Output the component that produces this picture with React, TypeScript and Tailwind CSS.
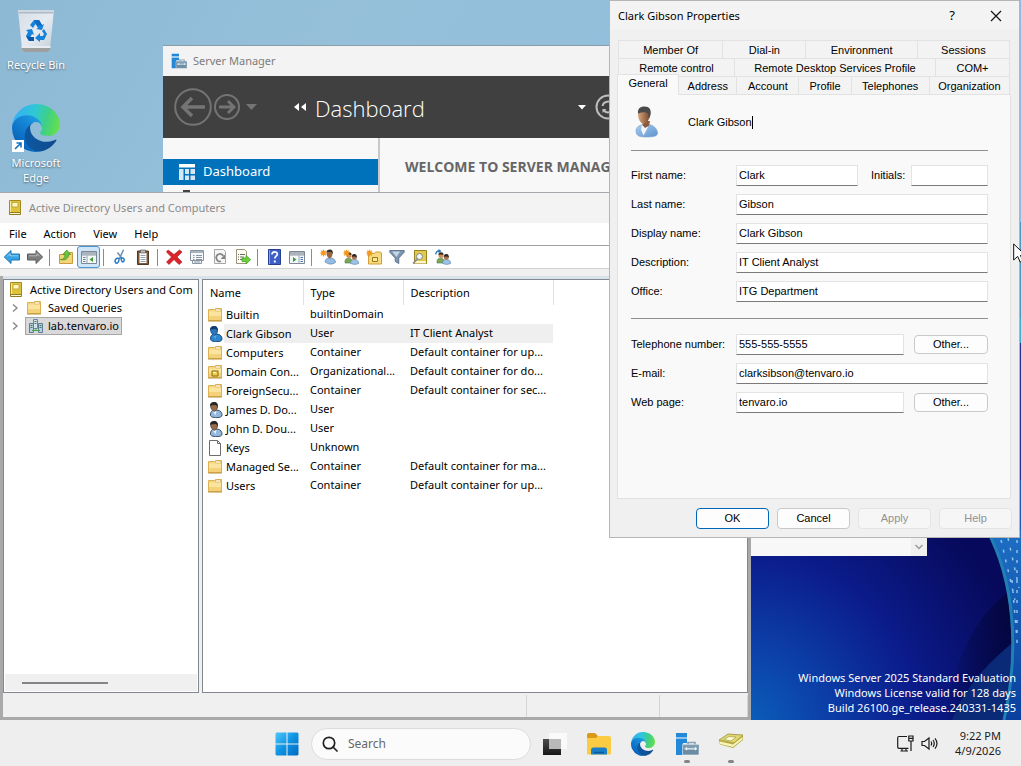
import type { ReactNode } from "react";

const UI = "font-['Noto_Sans','Open_Sans',sans-serif]";
const CLASSIC = "font-['Liberation_Sans',Arial,sans-serif]";

/* ---------- drawings ---------- */

function EdgeLogo({ className }: { className: string }) {
  return (
    <svg viewBox="0 0 256 256" className={className} aria-hidden="true">
      <defs>
        <linearGradient id="edge-a" x1="60" y1="175" x2="240" y2="175" gradientUnits="userSpaceOnUse">
          <stop offset="0" stopColor="#0c59a4" />
          <stop offset="1" stopColor="#114a8b" />
        </linearGradient>
        <linearGradient id="edge-b" x1="150" y1="90" x2="45" y2="210" gradientUnits="userSpaceOnUse">
          <stop offset="0" stopColor="#1b9de2" />
          <stop offset="0.4" stopColor="#1484d4" />
          <stop offset="1" stopColor="#0a66bd" />
        </linearGradient>
        <linearGradient id="edge-c" x1="20" y1="60" x2="250" y2="120" gradientUnits="userSpaceOnUse">
          <stop offset="0" stopColor="#35b1f1" />
          <stop offset="0.4" stopColor="#2fc8d4" />
          <stop offset="0.7" stopColor="#3fd084" />
          <stop offset="1" stopColor="#66e04c" />
        </linearGradient>
      </defs>
      <path fill="url(#edge-a)" d="M231.07 190.54c-3.41 1.78-6.93 3.35-10.54 4.71a101.93 101.93 0 0 1-35.88 6.46c-47.29 0-88.48-32.53-88.48-74.27a31.46 31.46 0 0 1 16.43-27.31c-42.77 1.8-53.76 46.37-53.76 72.48 0 73.83 68.04 81.31 82.7 81.31 7.9 0 19.82-2.3 26.97-4.56l1.31-.44a128.34 128.34 0 0 0 66.6-52.8 4 4 0 0 0-5.35-5.58z" />
      <path fill="url(#edge-b)" d="M105.73 241.42a79.2 79.2 0 0 1-22.74-21.34 80.72 80.72 0 0 1 29.53-120c3.12-1.47 8.45-4.13 15.54-4a32.35 32.35 0 0 1 25.69 13 31.88 31.88 0 0 1 6.36 18.66c0-.21 24.46-79.6-80-79.6-43.9 0-80 41.66-80 78.21a130.15 130.15 0 0 0 12.11 56 128 128 0 0 0 156.38 67.11 75.55 75.55 0 0 1-62.78-8z" />
      <path fill="url(#edge-c)" d="M152.33 148.86c-.81 1.05-3.3 2.5-3.3 5.66 0 2.61 1.7 5.12 4.72 7.23 14.38 10 41.49 8.68 41.56 8.68a59.56 59.56 0 0 0 30.27-8.35 61.38 61.38 0 0 0 30.43-52.88c.26-22.41-8-37.31-11.34-43.91C223.48 23.84 177.72 0 128 0A128 128 0 0 0 0 126.2c.48-36.54 36.8-66.05 80-66.05 3.5 0 23.46.34 42 10.07 16.34 8.58 24.9 18.94 30.85 29.21 6.18 10.67 7.28 24.15 7.28 29.52s-2.74 13.33-7.8 19.91z" />
    </svg>
  );
}

function RecycleBin() {
  return (
    <svg viewBox="0 0 48 48" className="size-12" aria-hidden="true">
      <defs>
        <linearGradient id="bin" x1="0" y1="0" x2="1" y2="1">
          <stop offset="0" stopColor="#d5dde6" />
          <stop offset="0.5" stopColor="#e6ebf1" />
          <stop offset="1" stopColor="#c3ccd6" />
        </linearGradient>
      </defs>
      <path d="M6 4h36l-4 39q-.3 3-3 3H13q-2.700-0-3-3z" fill="url(#bin)" />
      <path d="M8 4.500h32l2 3H6z" fill="#aebbc8" />
      <path d="M6 4h36l-.4 2H6.400z" fill="#cfd8e1" />
      <path d="M9.600 42h28.800l-.4 2q-.5 2-3 2H13q-2.500 0-3-2z" fill="#9da09f" />
      <path d="M9.500 40h29l-.2 2H9.700z" fill="#e9edf1" />
      <g fill="#1583dc">
        <path d="M18 19l4-5h5l3 5 2-1-2 6-6-1 2-1-2.500-4-2.500 4z" />
        <path d="M32 23l3 5-3 6h-4v2l-5-4 5-5v3h3l1-2-2-3z" />
        <path d="M14 24l6-1 2 6-2-1-1.500 3H22v4h-5l-3-5 2-4z" />
      </g>
      <path d="M14 30l3 5h5v-4h-4z" fill="#0b58a8" />
      <path d="M22 14h5l3 5-4 1-3-4z" fill="#0f6ac0" />
    </svg>
  );
}

function ServerManagerIcon({ className }: { className: string }) {
  return (
    <svg viewBox="0 0 24 24" className={className} aria-hidden="true">
      <path d="M1 1h11v4H1zM1 7h11v4H8v12H1z" fill="#2488d8" />
      <path d="M1 5h11v2H1z" fill="#8cc4ee" />
      <path d="M13 13v-2.500h7V13" fill="none" stroke="#8aa2b3" strokeWidth="1.600" />
      <path d="M7.500 12.500H24V23H7.500z" fill="#6a8ca5" stroke="#f0f3f5" strokeWidth=".6" />
      <path d="M8 12.800h15.700v4H8z" fill="#7f9db2" />
      <path d="M9.500 16.800h12.500M11.500 15.200v3M20.500 15.200v3" stroke="#eef4f8" strokeWidth="1.200" fill="none" />
    </svg>
  );
}

function BookIcon({ className = "size-4" }: { className?: string }) {
  return (
    <svg viewBox="0 0 16 16" className={className} aria-hidden="true">
      <path d="M2.500.5h11v12h-11z" fill="#dfc33d" stroke="#a38a1f" />
      <path d="M5 2.500h6v4.500H5z" fill="#fdf6c0" stroke="#b9a033" strokeWidth=".8" />
      <path d="M2.500 12.500h11v2h-11z" fill="#fff9d6" stroke="#8f7a1e" />
      <path d="M3.500 1v11" stroke="#f8eea0" />
    </svg>
  );
}

function FolderIcon({ unit = false }: { unit?: boolean }) {
  return (
    <svg viewBox="0 0 16 16" className="size-4 shrink-0" aria-hidden="true">
      <path d="M1.500 2.500h6l1-1h6v12h-13z" fill="#f6d77f" stroke="#dcb252" />
      <path d="M2 4.500h12v8.500H2z" fill="#fbe4a0" />
      <path d="M2 9h12v4H2z" fill="#f3d27a" />
      <path d="M8.500 2h5v2h-5z" fill="#fffdf0" stroke="#d3ab52" strokeWidth=".6" />
      <path d="M1 14h14" stroke="#b98f35" />
      {unit && (
        <>
          <path d="M5 7h6v5H5z" fill="#f0cf4a" stroke="#8a6a10" />
          <path d="M6 8.500h3" stroke="#fffbe0" />
        </>
      )}
    </svg>
  );
}

function PersonIcon({ className = "size-4", selected = false }: { className?: string; selected?: boolean }) {
  const hair = selected ? "#123f70" : "#2b2724";
  const skin = selected ? "#2b79ba" : "#9b6b48";
  const shirt = selected ? "#2e86cf" : "#93b9de";
  const line = selected ? "#0f3f70" : "#2f4254";
  return (
    <svg viewBox="0 0 16 16" className={className + " shrink-0"} aria-hidden="true">
      <path d="M3.500 13c0-3 1-4.300 3-4.800h4.500c2.500.5 4 2.400 4 4.700 0 1.800-1.600 2.700-5 2.700-4.500 0-6.500-.8-6.500-2.600z" fill={shirt} stroke={line} strokeWidth=".9" />
      <path d="M5.500 8.800h4l-1 4.500z" fill={selected ? "#5aa6df" : "#eef4fa"} />
      <path d="M3.500 3.500C3.500 1.800 5 .6 7 .6s3.500 1.200 3.500 3.600S9.200 9.300 7.400 9.300 3.500 6.500 3.500 3.500z" fill={skin} stroke={line} strokeWidth=".7" />
      <path d="M3 4C2.800 1.700 4.500.1 7.200.1S11.400 2 10.600 6C10 3.900 9.500 3.200 8.500 3 6.900 3.400 4.500 3.200 3 4z" fill={hair} />
    </svg>
  );
}

function LargeUser() {
  return (
    <svg viewBox="0 0 32 32" className="size-8" aria-hidden="true">
      <defs>
        <linearGradient id="shirt" x1="0" y1="0" x2="1" y2="1">
          <stop offset="0" stopColor="#a9cdef" />
          <stop offset="1" stopColor="#5f93cd" />
        </linearGradient>
        <linearGradient id="skin" x1="0" y1="0" x2="1" y2="0">
          <stop offset="0" stopColor="#d7a77f" />
          <stop offset="1" stopColor="#79492c" />
        </linearGradient>
      </defs>
      <path d="M5 25c0-4 3-5.500 7-6.500h6c5 1 8.500 4.500 8.500 9 0 2.500-4 3.500-11 3.500S5 30 5 25z" fill="url(#shirt)" stroke="#7aa2cb" strokeWidth=".6" />
      <path d="M11 19l6 2-4.500 8.500-2.500-6z" fill="#f2f6fb" />
      <path d="M12 15h7l-1 4.500-4 2.500-2.500-3z" fill="#8c5837" />
      <path d="M7 8c0-4 2.500-6 6-6s6 2.500 5.500 7.500c-.4 4.500-2.500 8-5.500 8.300C9.500 17.800 7 13 7 8z" fill="url(#skin)" />
      <path d="M7 7.500C6.500 3 9 .6 13.500.6 18.500.6 20.500 4 19.500 9l-1.500 4-.8-5C16 6 12 5.500 7 7.500z" fill="#4a4a49" />
    </svg>
  );
}

function DomainIcon() {
  return (
    <svg viewBox="0 0 16 16" className="size-4 shrink-0" aria-hidden="true">
      <path d="M5.500 1.500h4v9h-4z" fill="#d4e3ee" stroke="#66889f" />
      <path d="M1.500 5.500h4v9h-4zM10.500 5.500h4v9h-4z" fill="#b9cfdf" stroke="#5b7d95" />
      <path d="M6.500 3.500h2M6.500 5.500h2M2.500 7.500h2M11.500 7.500h2M2.500 9.500h2M11.500 9.500h2" stroke="#3f7a52" />
      <path d="M4 12.500h8M8 10v3" stroke="#4aa84a" />
    </svg>
  );
}

function PageIcon() {
  return (
    <svg viewBox="0 0 16 16" className="size-4 shrink-0" aria-hidden="true">
      <path d="M2.500.5h8l3 3v12h-11z" fill="#fff" stroke="#6d6d6d" />
      <path d="M10.500.5v3h3" fill="none" stroke="#6d6d6d" />
    </svg>
  );
}

const Svg = ({ children }: { children: ReactNode }) => (
  <svg viewBox="0 0 16 16" className="size-4" aria-hidden="true">
    {children}
  </svg>
);

const Star = () => (
  <path d="M3.500 0l.8 2 2-.7-.8 2 2 .8-2 .7.8 2-2-.7-.8 2-.8-2-2 .7.8-2-2-.7 2-.8-.8-2 2 .7z" fill="#f39a1d" />
);

const Crew = () => (
  <>
    <path d="M2 12.500c0-2.500 1.500-3.200 3.500-3.200s3.500.7 3.500 3.200v1.500H2z" fill="#7aa858" stroke="#4d7a35" strokeWidth=".6" />
    <circle cx="6" cy="6.500" r="2.500" fill="#c98f5f" />
    <path d="M3.500 6q0-3 2.700-2.800 2.500.2 2.300 2.800-2.500-1.200-5 0z" fill="#3b2d20" />
    <path d="M7.500 14.500c0-3 1.800-4 4-4s4.300 1 4.300 4q-4 2-8.300 0z" fill="#9dc1e4" stroke="#5d88b3" strokeWidth=".6" />
    <circle cx="11.300" cy="8.300" r="2.500" fill="#a8754f" />
    <path d="M8.800 7.800q0-3 2.700-2.800 2.500.2 2.300 3.300-2-1.500-5-.5z" fill="#2c2622" />
  </>
);

const Arrow = ({ fill, stroke, flip = false }: { fill: string; stroke: string; flip?: boolean }) => (
  <Svg>
    <path
      d={flip ? "M15.700 8L9 1.500v3.500H.5v6H9v3.500z" : "M.3 8L7 1.500v3.500h8.500v6H7v3.500z"}
      fill={fill}
      stroke={stroke}
    />
    <path d={flip ? "M2 6.800h8V4.500L13 7.500" : "M14 6.800H6V4.500L3 7.500"} fill="none" stroke="#fff" strokeOpacity=".45" />
  </Svg>
);

const ConsoleArt = ({ right = false }: { right?: boolean }) => (
  <Svg>
    <path d="M.5 2.500h15v12H.5z" fill="#f4f7fa" stroke="#7d8892" />
    <path d="M1 3h14v2.500H1z" fill="#a8b3bd" />
    <path d={right ? "M10 6.500v8" : "M6 6.500v8"} stroke="#9aa4ad" />
    <path d="M1 6h14" stroke="#8c97a1" />
    {right ? (
      <>
        <path d="M4 8v5l3.500-2.500z" fill="#3f9b34" />
        <path d="M11.500 8.500h2.500M11.500 10.500h2.500M11.500 12.500h2.500" stroke="#4e77b3" />
      </>
    ) : (
      <>
        <path d="M12 8v5l-3.500-2.500z" fill="#3f9b34" />
        <path d="M2 8.500h2.500M2 10.500h2.500M2 12.500h2.500" stroke="#6f8396" />
      </>
    )}
  </Svg>
);

type Tool = { name: string; art: ReactNode; active?: boolean } | null;

const TOOLS: Tool[] = [
  { name: "Back", art: <Arrow fill="#3aa3e3" stroke="#1973b5" /> },
  { name: "Forward", art: <Arrow fill="#7d7d7d" stroke="#5c5c5c" flip /> },
  null,
  {
    name: "Up one level",
    art: (
      <Svg>
        <path d="M1.500 5.500h5l1-2h7v11h-13z" fill="#f4d479" stroke="#c89b3c" />
        <path d="M2.500 10.500C5.500 10.300 7 9 7 5.500H4.800L8.700 1l4 4.500H10.500c0 4-3 6.300-8 5z" fill="#6cc43a" stroke="#3b8c1f" strokeWidth=".7" />
      </Svg>
    ),
  },
  { name: "Show or hide console tree", art: <ConsoleArt />, active: true },
  null,
  {
    name: "Cut",
    art: (
      <Svg>
        <path d="M11.500 .8L7.500 9.500M5.500 3.500L10 9.500" stroke="#6d8fae" strokeWidth="1.500" />
        <path d="M7 9.500c-3-1-5 2-3.500 4s3.800-.5 3.500-4zM9 9c2.500-.5 3.800 1 3 3s-3 .5-3-3z" fill="none" stroke="#2878c0" strokeWidth="1.500" />
      </Svg>
    ),
  },
  {
    name: "Paste",
    art: (
      <Svg>
        <path d="M2.500 2h11v13.500h-11z" fill="#7b5a3c" stroke="#4f3722" />
        <path d="M4.500 4h7v10h-7z" fill="#fff" />
        <path d="M5.500 1h5v3h-5z" fill="#b9b9b9" stroke="#5e5e5e" strokeWidth=".7" />
        <path d="M5.500 6.500h5M5.500 8.500h5M5.500 10.500h5M5.500 12.500h5" stroke="#8ba0b5" />
      </Svg>
    ),
  },
  null,
  {
    name: "Delete",
    art: (
      <Svg>
        <path d="M2 1l6 4.500L13.500 1 16 3l-5 5 5 5-3 2.500-5-5-5 5L.5 13l5-5-5-5z" fill="#dc2328" stroke="#a81318" strokeWidth=".6" />
      </Svg>
    ),
  },
  {
    name: "Properties",
    art: (
      <Svg>
        <path d="M1.500 1.500h13v10h-13zM3.500 11.500v3h9v-3" fill="#f5f7f9" stroke="#8a949e" />
        <path d="M2 3h12" stroke="#aab3bc" strokeWidth="2" />
        <path d="M4 6.500h1.500M7 6.500h6M4 8.500h1.500M7 8.500h6M4 10.500h1.500M7 10.500h6M5 13h6" stroke="#8796a5" />
      </Svg>
    ),
  },
  {
    name: "Refresh",
    art: (
      <Svg>
        <path d="M2.500.5h9l2 2v12h-11z" fill="#f6f6f6" stroke="#a6a6a6" />
        <path d="M11.300 7A3.700 3.700 0 1 0 9 12.300" fill="none" stroke="#838383" strokeWidth="1.700" />
        <path d="M13 5.500v4.500H8.500z" fill="#838383" />
      </Svg>
    ),
  },
  {
    name: "Export list",
    art: (
      <Svg>
        <path d="M1.500.5h8l2 2v12h-10z" fill="#fffdf0" stroke="#9a947c" />
        <path d="M3 5.500h1M5 5.500h5M3 8h1M5 8h4M3 10.500h1M5 10.500h3" stroke="#6a6a6a" />
        <path d="M7 9h4V6.500l4.700 4.200L11 15v-2.500H7z" fill="#6ccf3c" stroke="#3b9a1d" strokeWidth=".7" />
      </Svg>
    ),
  },
  null,
  {
    name: "Help",
    art: (
      <Svg>
        <path d="M2.500.5h12v15h-12z" fill="#3c5fc8" stroke="#28408f" />
        <path d="M3.500 1v14" stroke="#8aa2ec" />
        <path d="M6 5.500c0-3.500 5.300-3.500 5.300-.3 0 2-2.500 2-2.500 4.300" fill="none" stroke="#fff" strokeWidth="1.700" />
        <path d="M7.800 11.500h2v2h-2z" fill="#fff" />
      </Svg>
    ),
  },
  { name: "Show or hide action pane", art: <ConsoleArt right /> },
  null,
  {
    name: "New user",
    art: (
      <Svg>
        <path d="M5 13c0-2.500 1.500-3.500 3.500-4h3c2.500.5 4 2 4 4.500q-5 3.500-10.500-.5z" fill="#93bce4" stroke="#557ea8" strokeWidth=".6" />
        <path d="M6.500 4c0-2 1.200-3 3-3s3 1.200 3 3.500-1.200 4.700-2.800 4.700S6.500 7 6.500 4z" fill="#9a6440" />
        <path d="M6.500 3.500C6.500 1.500 8 .5 10 .5s3.300 1.800 2.700 5c-.5-2-1.200-2.500-2.200-2.700-1.500.3-2.800 0-4 .7z" fill="#332b26" />
        <Star />
      </Svg>
    ),
  },
  { name: "New group", art: <Svg><Crew /><Star /></Svg> },
  {
    name: "New organizational unit",
    art: (
      <Svg>
        <path d="M2.500 4.500h6l1-1.500h5l1 1v11h-13z" fill="#f7d97e" stroke="#cf9f3b" />
        <path d="M6.500 8.500h5v4h-5z" fill="#fbeb9c" stroke="#9b7a16" />
        <Star />
      </Svg>
    ),
  },
  {
    name: "Filter",
    art: (
      <Svg>
        <path d="M.8 1.500h14.400v1.800L9.800 9v5.500l-3.600-2V9L.8 3.300z" fill="#7c96b1" stroke="#4c6580" strokeWidth=".8" />
        <path d="M3 2.500h8L7.500 8z" fill="#c9d6e3" />
      </Svg>
    ),
  },
  {
    name: "Find objects",
    art: (
      <Svg>
        <path d="M2.500 1.500h12v13h-12z" fill="#e3ca4c" stroke="#97801f" />
        <path d="M3 12h11v2.500H3z" fill="#fff7c9" />
        <circle cx="7.500" cy="7.500" r="3" fill="#f2f8fd" stroke="#7a8791" />
        <path d="M5.500 9.800L1 14.500" stroke="#8d8d8d" strokeWidth="1.700" />
      </Svg>
    ),
  },
  {
    name: "Add to group",
    art: (
      <Svg>
        <Crew />
        <path d="M.8 5.500Q.8 2 4 2" fill="none" stroke="#2478bd" strokeWidth="1.300" />
        <path d="M3.500 0l3 2.100-3 2.100z" fill="#2478bd" />
      </Svg>
    ),
  },
];

function Wallpaper() {
  return (
    <svg viewBox="0 0 1021 720" preserveAspectRatio="none" className="absolute inset-0 size-full" aria-hidden="true">
      <defs>
        <linearGradient id="sky" x1="0" y1="0" x2="1" y2="0.400">
          <stop offset="0" stopColor="#8db9d5" />
          <stop offset="0.300" stopColor="#96c0da" />
          <stop offset="1" stopColor="#8cbdde" />
        </linearGradient>
        <radialGradient id="deep" cx="740" cy="730" r="290" gradientUnits="userSpaceOnUse">
          <stop offset="0" stopColor="#0a62bd" />
          <stop offset="0.300" stopColor="#0c3fa8" />
          <stop offset="0.620" stopColor="#0b1b8a" />
          <stop offset="1" stopColor="#070a5c" />
        </radialGradient>
        <linearGradient id="shade" x1="0" y1="0" x2="1" y2="0">
          <stop offset="0" stopColor="#04063e" stopOpacity="0" />
          <stop offset="1" stopColor="#04063e" stopOpacity="1" />
        </linearGradient>
        <linearGradient id="petal" x1="0" y1="0" x2="0" y2="1">
          <stop offset="0" stopColor="#1d6fc4" />
          <stop offset="1" stopColor="#0a3f9e" />
        </linearGradient>
      </defs>
      <path d="M0 0h1021v720H0z" fill="url(#sky)" />
      <path d="M740 343h281v377H740z" fill="url(#deep)" />
      <path d="M1012 590c-36 22-60 75-68 130h72V600z" fill="url(#shade)" />
      <path d="M1012 643c-30 25-50 50-60 77h69v-77z" fill="#0a2a78" />
      <path d="M1018 222h3v96h-3z" fill="#4a9ac8" />
      <path d="M1018 318h3v25h-3z" fill="#3cb0d2" />
      <path d="M1018 343h3v137h-3z" fill="#24309c" />
      <path d="M1018 480h3v60h-3z" fill="#1c58b8" />
      <path d="M986 530c26 45 33 120 19 190h16V530z" fill="url(#petal)" />
      <path d="M987 530c27 50 33 120 17 190" fill="none" stroke="#2080b4" strokeWidth="3" />
      <g stroke="#8fc0ec" strokeWidth="1.500" strokeDasharray="3 7">
        <path d="M1001 540l14 60M1008 538l11 50M1017 540v110M1012 580l5 60" />
      </g>
    </svg>
  );
}

/* ---------- desktop ---------- */

function DesktopIcon({ label, children }: { label: string; children: ReactNode }) {
  return (
    <button type="button" className="flex w-[72px] flex-col items-center text-center text-[11px] leading-[15px] text-white [text-shadow:0_1px_2px_#0008]">
      {children}
      <span className="mt-[3px] px-1">{label}</span>
    </button>
  );
}

function ServerManager() {
  return (
    <section aria-label="Server Manager" className="absolute left-[163px] top-[45px] flex h-[511px] w-[764px] flex-col border-t border-[#8d9da8] bg-[#f8f8f8]">
      <header className="flex h-[30px] shrink-0 items-center gap-[6px] bg-[#f3f3f3] px-2 text-[11px] text-[#7c7c7c]">
        <ServerManagerIcon className="size-4" />
        Server Manager
      </header>
      <div className="flex h-[62px] shrink-0 items-center bg-[#404040] pl-[11px] text-white">
        <svg viewBox="0 0 84 40" className="h-10 w-[84px]" fill="none" stroke="#747474" aria-hidden="true">
          <circle cx="19" cy="20" r="17.800" strokeWidth="2" />
          <path d="M31 20H9M18 11l-9 9 9 9" strokeWidth="3.500" />
          <circle cx="53" cy="20" r="12" strokeWidth="2" />
          <path d="M45 20h15M54 14l6 6-6 6" strokeWidth="2.800" />
          <path d="M72 17h11l-5.500 6z" fill="#747474" stroke="none" />
        </svg>
        <svg viewBox="0 0 14 10" className="ml-[35px] h-[10px] w-[14px]" fill="#fff" aria-hidden="true">
          <path d="M6 1v8L1 5zM13 1v8L8 5z" />
        </svg>
        <h1 className="ml-2 w-[263px] pt-[2px] font-['Open_Sans',sans-serif] text-[22px] font-light">Dashboard</h1>
        <svg viewBox="0 0 8 5" className="h-[5px] w-2" fill="#fff" aria-hidden="true">
          <path d="M0 0h8L4 4.500z" />
        </svg>
        <svg viewBox="0 0 26 26" className="ml-[9px] size-[26px]" fill="none" stroke="#bdbdbd" strokeWidth="2" aria-hidden="true">
          <circle cx="13" cy="13" r="11.500" />
          <path d="M7.500 12c1-5 8-6 10-1.500M18.500 14c-1 5-8 6-10 1.500" />
          <path d="M18.500 7v4h-4zM7.500 19v-4h4z" fill="#bdbdbd" stroke="none" />
        </svg>
      </div>
      <div className="flex min-h-0 flex-1">
        <nav className="w-[217px] border-r-2 border-[#c8c8cb] pt-[21px]">
          <button type="button" className="flex h-[26px] w-full items-center gap-2 bg-[#0072bc] pl-4 text-[13px] text-white">
            <svg viewBox="0 0 16 16" className="size-4" aria-hidden="true">
              <path d="M0 0h16v3.500H0z" fill="#fff" />
              <path d="M0 5h4.500v11H0zM6 5h4v5H6zM11.500 5H16v5h-4.500zM6 11.500h4V16H6zM11.500 11.500H16V16h-4.500z" fill="#d5e7f4" />
            </svg>
            Dashboard
          </button>
          <svg viewBox="0 0 16 16" className="ml-4 mt-[5px] size-4" aria-hidden="true">
            <path d="M4 0h7v16H4z" fill="#444" />
          </svg>
        </nav>
        <div className="flex min-w-0 flex-1">
          <h2 className="min-w-0 flex-1 whitespace-nowrap pl-[25px] pt-[19px] font-['Open_Sans',sans-serif] text-[14px] font-bold leading-5 text-[#666]">WELCOME TO SERVER MANAGER</h2>
          <div className="flex w-4 items-end justify-center bg-[#f0f0f0] pb-1">
            <svg viewBox="0 0 8 10" className="h-[10px] w-2" fill="none" stroke="#9b9b9b" strokeWidth="1.500" aria-hidden="true">
              <path d="M.5 3L4 6.500 7.500 3" />
            </svg>
          </div>
        </div>
      </div>
    </section>
  );
}

const ROWS = [
  { icon: <FolderIcon />, name: "Builtin", type: "builtinDomain", desc: "" },
  { icon: <PersonIcon selected />, name: "Clark Gibson", type: "User", desc: "IT Client Analyst", selected: true },
  { icon: <FolderIcon />, name: "Computers", type: "Container", desc: "Default container for up..." },
  { icon: <FolderIcon unit />, name: "Domain Con...", type: "Organizational...", desc: "Default container for do..." },
  { icon: <FolderIcon />, name: "ForeignSecu...", type: "Container", desc: "Default container for sec..." },
  { icon: <PersonIcon />, name: "James D. Do...", type: "User", desc: "" },
  { icon: <PersonIcon />, name: "John D. Dou...", type: "User", desc: "" },
  { icon: <PageIcon />, name: "Keys", type: "Unknown", desc: "" },
  { icon: <FolderIcon />, name: "Managed Se...", type: "Container", desc: "Default container for ma..." },
  { icon: <FolderIcon />, name: "Users", type: "Container", desc: "Default container for up..." },
];

const Chevron = () => (
  <svg viewBox="0 0 8 8" className="h-2 w-2" fill="none" stroke="#8a8a8a" strokeWidth="1.400" aria-hidden="true">
    <path d="M2 .5L6 4 2 7.500" />
  </svg>
);

function DirectoryWindow() {
  return (
    <section aria-label="Active Directory Users and Computers" className="absolute bottom-0 left-0 top-[192px] flex w-[751px] flex-col border-t border-[#a5a9ad] bg-[#a9a9a9] text-[11px] text-black">
      <header className="flex h-[30px] shrink-0 items-center gap-[6px] bg-[#f3f3f3] pl-[7px] text-[#8a8a8a]">
        <BookIcon />
        Active Directory Users and Computers
      </header>
      <nav className="flex h-[22px] shrink-0 items-center gap-[17px] bg-white pl-[9px]">
        {["File", "Action", "View", "Help"].map((m) => (
          <button key={m} type="button">{m}</button>
        ))}
      </nav>
      <div className="flex h-[24px] shrink-0 items-center border-y border-b-[#d2d2d2] border-t-[#a0a0a0] bg-white">
        {TOOLS.map((t, i) =>
          t ? (
            <button
              key={t.name}
              type="button"
              aria-label={t.name}
              className={
                t.active
                  ? "flex h-[22px] w-[23px] items-center justify-center rounded-[3px] border border-[#4a94d8] bg-[#cfe5f8]"
                  : "flex h-[22px] w-[23px] items-center justify-center"
              }
            >
              {t.art}
            </button>
          ) : (
            <span key={i} className="ml-[3px] mr-1 h-[17px] w-px bg-[#8b8b8b]" />
          ),
        )}
      </div>
      <div className="h-[7px] shrink-0 bg-[#f0f0f0]" />
      <div className="mx-[3px] flex min-h-0 flex-1 flex-col bg-[#f0f0f0]">
        <div className="h-[3px] shrink-0 bg-[#d7e2eb]" />
        <div className="flex min-h-0 flex-1 gap-[3px]">
          <div className="flex w-[196px] flex-col border border-[#828790] bg-white pt-px">
            <ul className="flex-1 overflow-hidden whitespace-nowrap leading-[18px]">
              <li className="flex items-center gap-[6px] pl-1">
                <BookIcon className="size-4 shrink-0" />
                Active Directory Users and Com
              </li>
              <li className="flex items-center gap-[6px] pl-[7px]">
                <Chevron />
                <span className="ml-[1px]"><FolderIcon /></span>
                Saved Queries
              </li>
              <li className="flex items-center gap-[6px] pl-[7px]">
                <Chevron />
                <span className="flex h-[18px] items-center gap-1 border border-[#a6a6a6] bg-[#d9d9d9] px-[2px]">
                  <DomainIcon />
                  lab.tenvaro.io
                </span>
              </li>
            </ul>
            <div className="mx-px mb-px flex h-[17px] items-center bg-[#f0f0f0] pl-[17px]">
              <span className="h-[2px] w-[86px] bg-[#858585]" />
            </div>
          </div>
          <div className="min-w-0 flex-1 overflow-hidden border border-[#828790] bg-white">
            <table className="w-[350px] table-fixed border-collapse">
              <colgroup>
                <col className="w-[100px]" />
                <col className="w-[100px]" />
                <col className="w-[150px]" />
              </colgroup>
              <thead>
                <tr className="h-[25px] text-left">
                  {["Name", "Type", "Description"].map((h) => (
                    <th key={h} scope="col" className="border-r border-[#e2e2e2] px-[7px] pt-[2px] font-normal">{h}</th>
                  ))}
                </tr>
              </thead>
              <tbody>
                {ROWS.map((r) => (
                  <tr key={r.name} className="h-[19px] whitespace-nowrap">
                    <td className="p-0">
                      <span className="flex items-center gap-[1px] pl-[4px]">
                        {r.icon}
                        <span className={r.selected ? "flex-1 bg-[#efefef] pl-[2px] leading-[19px]" : "pl-[2px] leading-[19px]"}>{r.name}</span>
                      </span>
                    </td>
                    <td className={r.selected ? "bg-[#efefef] py-0 pl-[7px]" : "py-0 pl-[7px]"}>{r.type}</td>
                    <td className={r.selected ? "bg-[#efefef] py-0 pl-[7px]" : "py-0 pl-[7px]"}>{r.desc}</td>
                  </tr>
                ))}
              </tbody>
            </table>
          </div>
        </div>
        <div className="mt-[2px] flex h-[22px] shrink-0 divide-x divide-[#d5d5d5]">
          <span className="flex-1" />
          <span className="w-[133px]" />
          <span className="w-[88px] border-r border-[#d5d5d5]" />
        </div>
      </div>
      <div className="h-[3px] shrink-0" />
    </section>
  );
}

function Tab({ children }: { children: ReactNode }) {
  return (
    <button type="button" role="tab" aria-selected="false" className="h-[18px] border-r border-t border-[#e2e2e2] bg-[#f3f3f3] pt-px">
      {children}
    </button>
  );
}

function Field({ id, label, value, children }: { id: string; label: string; value: string; children?: ReactNode }) {
  return (
    <div className="flex h-[21px] items-center">
      <label htmlFor={id} className="w-[105px] shrink-0">{label}</label>
      <input
        id={id}
        defaultValue={value}
        className="h-[21px] min-w-0 flex-1 border border-[#e3e3e3] border-b-[#7a7a7a] bg-white pb-px pl-[2px] outline-none"
      />
      {children}
    </div>
  );
}

const Other = ({ label }: { label: string }) => (
  <button type="button" aria-label={label} className="ml-[10px] h-[19px] w-[74px] rounded-[4px] border border-[#c9c9c9] bg-[#fdfdfd]">
    Other...
  </button>
);

function PropertiesDialog() {
  return (
    <section role="dialog" aria-label="Clark Gibson Properties" className={`absolute right-[1px] top-0 flex h-[538px] w-[411px] flex-col border border-[#b5b5b5] bg-[#f0f0f0] text-[11px] text-black ${CLASSIC}`}>
      <header className="flex h-[29px] shrink-0 items-center bg-[#f3f3f3] pl-2 font-['Noto_Sans',sans-serif]">
        <h2 className="flex-1 pt-px">Clark Gibson Properties</h2>
        <button type="button" aria-label="Help" className="w-[30px] text-[13px]">?</button>
        <button type="button" aria-label="Close" className="ml-[14px] mr-2 flex w-[30px] justify-center">
          <svg viewBox="0 0 12 12" className="size-3" stroke="#111" strokeWidth="1.200" aria-hidden="true">
            <path d="M1 1l10 10M11 1L1 11" />
          </svg>
        </button>
      </header>
      <div className="ml-[7px] mr-[8px] mt-[10px] flex-1">
        <div role="tablist">
          <div className="mx-[1px] grid grid-cols-[104fr_83fr_111fr_92fr] border-l border-[#e2e2e2]">
            <Tab>Member Of</Tab>
            <Tab>Dial-in</Tab>
            <Tab>Environment</Tab>
            <Tab>Sessions</Tab>
          </div>
          <div className="mx-[1px] grid grid-cols-[116fr_201fr_74fr] border-l border-[#e2e2e2]">
            <Tab>Remote control</Tab>
            <Tab>Remote Desktop Services Profile</Tab>
            <Tab>COM+</Tab>
          </div>
          <div className="mr-[1px] grid grid-cols-[62fr_58fr_62fr_52fr_78fr_80fr]">
            <button type="button" role="tab" aria-selected="true" className="z-10 -mb-px -mt-[2px] border border-b-0 border-[#e2e2e2] bg-[#f9f9f9] pb-[3px]">
              General
            </button>
            <Tab>Address</Tab>
            <Tab>Account</Tab>
            <Tab>Profile</Tab>
            <Tab>Telephones</Tab>
            <Tab>Organization</Tab>
          </div>
        </div>
        <div role="tabpanel" aria-label="General" className="h-[405px] border border-[#e2e2e2] bg-[#f9f9f9] pl-[13px] pr-[22px] pt-[11px]">
          <div className="flex h-[45px] items-start border-b border-[#8f8f8f]">
            <LargeUser />
            <div className="ml-[25px] mt-2 flex items-center">
              <input aria-label="Name" defaultValue="Clark Gibson" className="field-sizing-content bg-transparent outline-none" />
              <span className="h-[13px] w-px bg-black" />
            </div>
          </div>
          <form className="mt-[14px]" onSubmit={(e) => e.preventDefault()}>
            <div className="flex flex-col gap-2">
              <Field id="first" label="First name:" value="Clark">
                <label htmlFor="initials" className="ml-[13px] w-[40px] shrink-0">Initials:</label>
                <input id="initials" className="h-[21px] w-[77px] border border-[#e3e3e3] border-b-[#7a7a7a] bg-white outline-none" />
              </Field>
              <Field id="last" label="Last name:" value="Gibson" />
              <Field id="display" label="Display name:" value="Clark Gibson" />
              <Field id="description" label="Description:" value="IT Client Analyst" />
              <Field id="office" label="Office:" value="ITG Department" />
            </div>
            <hr className="mb-[15px] mt-4 border-[#8f8f8f]" />
            <div className="flex flex-col gap-2">
              <Field id="tel" label="Telephone number:" value="555-555-5555"><Other label="Other telephone numbers" /></Field>
              <Field id="email" label="E-mail:" value="clarksibson@tenvaro.io" />
              <Field id="web" label="Web page:" value="tenvaro.io"><Other label="Other web pages" /></Field>
            </div>
          </form>
        </div>
      </div>
      <footer className="mb-2 mr-[7px] flex justify-end gap-2">
        <button type="button" className="h-[21px] w-[73px] rounded-[4px] border border-[#0067b8] bg-[#fdfdfd]">OK</button>
        <button type="button" className="h-[21px] w-[73px] rounded-[4px] border border-[#c9c9c9] bg-[#fdfdfd]">Cancel</button>
        <button type="button" disabled className="h-[21px] w-[73px] rounded-[4px] border border-[#e4e4e4] bg-[#f6f6f6] text-[#929292]">Apply</button>
        <button type="button" disabled className="h-[21px] w-[73px] rounded-[4px] border border-[#e4e4e4] bg-[#f6f6f6] text-[#929292]">Help</button>
      </footer>
    </section>
  );
}

/* ---------- taskbar ---------- */

function TaskButton({ label, running = false, children }: { label: string; running?: boolean; children: ReactNode }) {
  return (
    <button type="button" aria-label={label} className="relative flex size-6 items-center justify-center">
      {children}
      {running && <span className="absolute -bottom-[7px] h-[3px] w-[6px] rounded-full bg-[#858585]" />}
    </button>
  );
}

function Taskbar() {
  return (
    <footer className="grid h-[46px] shrink-0 grid-cols-[1fr_auto_1fr] items-center bg-[#eeeeee] text-[#1b1b1b]">
      <span />
      <div className="flex items-center gap-[20px] pr-[3px] pt-[2px]">
        <div className="flex items-center gap-3">
          <TaskButton label="Start">
            <svg viewBox="0 0 24 24" className="size-6" aria-hidden="true">
              <defs>
                <linearGradient id="win" x1="0" y1="0" x2="1" y2="1">
                  <stop offset="0" stopColor="#4cc8fb" />
                  <stop offset="0.500" stopColor="#0f93e2" />
                  <stop offset="1" stopColor="#0067c4" />
                </linearGradient>
              </defs>
              <path d="M1.500.5H11.500v11H.5v-10zM12.500.5h10l1 1v10h-11zM.5 12.500h11v11h-10l-1-1zM12.500 12.500h11v10l-1 1h-10z" fill="url(#win)" />
            </svg>
          </TaskButton>
          <label className="flex h-8 w-[220px] items-center gap-[10px] rounded-full border border-[#dcdcdc] bg-[#fbfbfb] pl-[10px]">
            <svg viewBox="0 0 16 16" className="size-4 shrink-0" fill="none" stroke="#222" strokeWidth="1.700" aria-hidden="true">
              <circle cx="7" cy="7" r="5.700" />
              <path d="M11 11l4 4" strokeLinecap="round" />
            </svg>
            <input type="search" placeholder="Search" aria-label="Search" className="min-w-0 flex-1 bg-transparent text-[12px] outline-none placeholder:text-[#666]" />
          </label>
          <TaskButton label="Task view">
            <svg viewBox="0 0 24 24" className="size-6" aria-hidden="true">
              <defs>
                <linearGradient id="tv" x1="0" y1="0" x2="0" y2="1">
                  <stop offset="0" stopColor="#4d4d4d" />
                  <stop offset="1" stopColor="#161616" />
                </linearGradient>
              </defs>
              <path d="M0 7h18v16H0z" fill="url(#tv)" />
              <path d="M6 1h18v16H6z" fill="#fafafa" />
              <path d="M6 7h12v10H6z" fill="#b9b9b9" />
            </svg>
          </TaskButton>
        </div>
        <TaskButton label="File Explorer">
          <svg viewBox="0 0 24 24" className="size-6" aria-hidden="true">
            <path d="M0 3q0-2 2-2h6l3 3v4H0z" fill="#d99a17" />
            <path d="M0 6h9l2-2h11q2 0 2 2v15q0 1.500-1.500 1.500h-21Q0 22.500 0 21z" fill="#fbcb43" />
            <path d="M4 22.500V18q0-2.500 2.500-2.500h11Q20 15.500 20 18v4.500z" fill="#1b7fc8" />
            <path d="M7 20.500h10" stroke="#0d5a9b" strokeWidth="1.500" />
          </svg>
        </TaskButton>
        <TaskButton label="Microsoft Edge"><EdgeLogo className="size-6" /></TaskButton>
        <TaskButton label="Server Manager" running><ServerManagerIcon className="size-6" /></TaskButton>
        <TaskButton label="Active Directory Users and Computers" running>
          <svg viewBox="0 0 24 24" className="size-6" aria-hidden="true">
            <path d="M0 8L9 2l15 1-9 8z" fill="#e0d772" stroke="#8e8530" strokeWidth=".7" />
            <path d="M5 7.500l5-3 7 .5-5 4z" fill="#fbf9d0" stroke="#9c9339" strokeWidth=".6" />
            <path d="M0 8l15 3 9-8v5l-10 8L1 12.500z" fill="#b8ab3c" />
            <path d="M1 9.500l13 3 9.500-7.500v2.500L14 15 1 12z" fill="#f7f3bd" />
          </svg>
        </TaskButton>
      </div>
      <div className="flex items-center justify-end pr-5">
        <svg viewBox="0 0 17 17" className="size-[17px]" fill="none" stroke="#1b1b1b" strokeWidth="1.200" aria-hidden="true">
          <path d="M10 1.500H2Q.7 1.500.7 3v9q0 1.300 1.300 1.300h9.500M5 13.500v2.500M9 13.500v2.500M3.500 16h7.500M11.800 1h4.200v5h-4.200zM14 6v10M12.500 3.300h3" />
        </svg>
        <svg viewBox="0 0 17 17" className="ml-[7px] size-[17px]" fill="none" stroke="#1b1b1b" strokeWidth="1.200" aria-hidden="true">
          <path d="M1 6.500h2.500L8 3v11L3.500 10.500H1zM10 6.500q1.300 2 0 4M12 5q2.500 3.500 0 7M14 3.300q4 5.200 0 10.400" />
        </svg>
        <div className="ml-[17px] text-right text-[11px] leading-[15px]">
          <div>9:22 PM</div>
          <div>4/9/2026</div>
        </div>
      </div>
    </footer>
  );
}

export default function App() {
  return (
    <div className={`flex h-screen flex-col overflow-hidden ${UI}`}>
      <main className="relative min-h-0 flex-1 overflow-hidden">
        <Wallpaper />
        <div className="relative flex flex-col items-start gap-8 pt-[6px]">
          <DesktopIcon label="Recycle Bin"><RecycleBin /></DesktopIcon>
          <DesktopIcon label="Microsoft Edge">
            <span className="relative">
              <EdgeLogo className="size-12" />
              <svg viewBox="0 0 12 12" className="absolute bottom-0 left-0 size-3" aria-hidden="true">
                <path d="M0 0h12v12H0z" fill="#fff" />
                <path d="M3 9l6-6M4.500 3H9v4.500" fill="none" stroke="#1471bd" strokeWidth="1.600" />
              </svg>
            </span>
          </DesktopIcon>
        </div>
        <ServerManager />
        <p className="absolute bottom-[5px] right-[5px] text-right text-[11px] leading-[15px] text-white">
          Windows Server 2025 Standard Evaluation
          <br />
          Windows License valid for 128 days
          <br />
          Build 26100.ge_release.240331-1435
        </p>
        <DirectoryWindow />
        <PropertiesDialog />
        <svg viewBox="0 0 14 20" className="absolute left-[1013px] top-[243px] h-5 w-[14px]" aria-hidden="true">
          <path d="M.7 1v16l4-3.600 2.500 5.600 2.700-1.200-2.500-5.400h5.300z" fill="#fff" stroke="#111" />
        </svg>
      </main>
      <Taskbar />
    </div>
  );
}
